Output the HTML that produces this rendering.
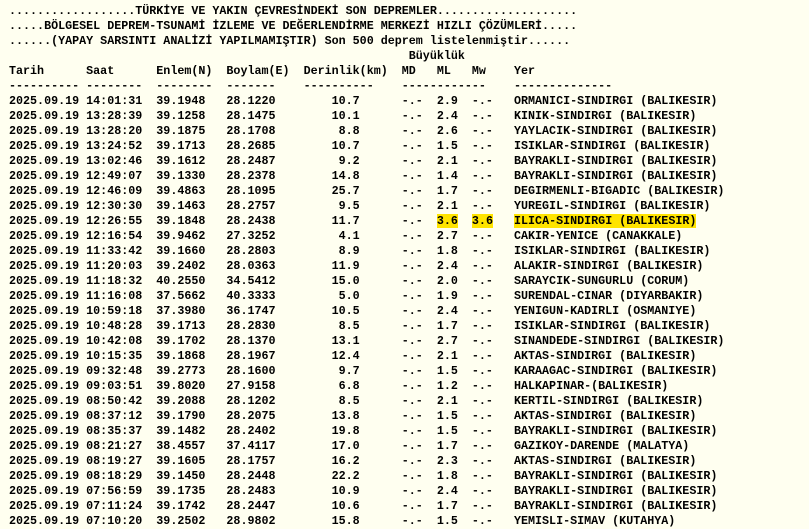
<!DOCTYPE html>
<html><head><meta charset="utf-8"><style>
html,body{margin:0;padding:0;background:#fffff0;width:809px;height:528px;overflow:hidden}
pre{margin:0;position:absolute;left:9px;top:4px;font-family:"Liberation Mono",monospace;font-weight:bold;font-size:11.7px;line-height:15px;color:#000}
.h{background:#ffe400}
</style></head><body><pre>..................TÜRKİYE VE YAKIN ÇEVRESİNDEKİ SON DEPREMLER....................
.....BÖLGESEL DEPREM-TSUNAMİ İZLEME VE DEĞERLENDİRME MERKEZİ HIZLI ÇÖZÜMLERİ.....
......(YAPAY SARSINTI ANALİZİ YAPILMAMIŞTIR) Son 500 deprem listelenmiştir......
                                                         Büyüklük
Tarih      Saat      Enlem(N)  Boylam(E)  Derinlik(km)  MD   ML   Mw    Yer
---------- --------  --------  -------    ----------    ------------    --------------
2025.09.19 14:01:31  39.1948   28.1220        10.7      -.-  2.9  -.-   ORMANICI-SINDIRGI (BALIKESIR)
2025.09.19 13:28:39  39.1258   28.1475        10.1      -.-  2.4  -.-   KINIK-SINDIRGI (BALIKESIR)
2025.09.19 13:28:20  39.1875   28.1708         8.8      -.-  2.6  -.-   YAYLACIK-SINDIRGI (BALIKESIR)
2025.09.19 13:24:52  39.1713   28.2685        10.7      -.-  1.5  -.-   ISIKLAR-SINDIRGI (BALIKESIR)
2025.09.19 13:02:46  39.1612   28.2487         9.2      -.-  2.1  -.-   BAYRAKLI-SINDIRGI (BALIKESIR)
2025.09.19 12:49:07  39.1330   28.2378        14.8      -.-  1.4  -.-   BAYRAKLI-SINDIRGI (BALIKESIR)
2025.09.19 12:46:09  39.4863   28.1095        25.7      -.-  1.7  -.-   DEGIRMENLI-BIGADIC (BALIKESIR)
2025.09.19 12:30:30  39.1463   28.2757         9.5      -.-  2.1  -.-   YUREGIL-SINDIRGI (BALIKESIR)
2025.09.19 12:26:55  39.1848   28.2438        11.7      -.-  <span class="h">3.6</span>  <span class="h">3.6</span>   <span class="h">ILICA-SINDIRGI (BALIKESIR)</span>
2025.09.19 12:16:54  39.9462   27.3252         4.1      -.-  2.7  -.-   CAKIR-YENICE (CANAKKALE)
2025.09.19 11:33:42  39.1660   28.2803         8.9      -.-  1.8  -.-   ISIKLAR-SINDIRGI (BALIKESIR)
2025.09.19 11:20:03  39.2402   28.0363        11.9      -.-  2.4  -.-   ALAKIR-SINDIRGI (BALIKESIR)
2025.09.19 11:18:32  40.2550   34.5412        15.0      -.-  2.0  -.-   SARAYCIK-SUNGURLU (CORUM)
2025.09.19 11:16:08  37.5662   40.3333         5.0      -.-  1.9  -.-   SURENDAL-CINAR (DIYARBAKIR)
2025.09.19 10:59:18  37.3980   36.1747        10.5      -.-  2.4  -.-   YENIGUN-KADIRLI (OSMANIYE)
2025.09.19 10:48:28  39.1713   28.2830         8.5      -.-  1.7  -.-   ISIKLAR-SINDIRGI (BALIKESIR)
2025.09.19 10:42:08  39.1702   28.1370        13.1      -.-  2.7  -.-   SINANDEDE-SINDIRGI (BALIKESIR)
2025.09.19 10:15:35  39.1868   28.1967        12.4      -.-  2.1  -.-   AKTAS-SINDIRGI (BALIKESIR)
2025.09.19 09:32:48  39.2773   28.1600         9.7      -.-  1.5  -.-   KARAAGAC-SINDIRGI (BALIKESIR)
2025.09.19 09:03:51  39.8020   27.9158         6.8      -.-  1.2  -.-   HALKAPINAR-(BALIKESIR)
2025.09.19 08:50:42  39.2088   28.1202         8.5      -.-  2.1  -.-   KERTIL-SINDIRGI (BALIKESIR)
2025.09.19 08:37:12  39.1790   28.2075        13.8      -.-  1.5  -.-   AKTAS-SINDIRGI (BALIKESIR)
2025.09.19 08:35:37  39.1482   28.2402        19.8      -.-  1.5  -.-   BAYRAKLI-SINDIRGI (BALIKESIR)
2025.09.19 08:21:27  38.4557   37.4117        17.0      -.-  1.7  -.-   GAZIKOY-DARENDE (MALATYA)
2025.09.19 08:19:27  39.1605   28.1757        16.2      -.-  2.3  -.-   AKTAS-SINDIRGI (BALIKESIR)
2025.09.19 08:18:29  39.1450   28.2448        22.2      -.-  1.8  -.-   BAYRAKLI-SINDIRGI (BALIKESIR)
2025.09.19 07:56:59  39.1735   28.2483        10.9      -.-  2.4  -.-   BAYRAKLI-SINDIRGI (BALIKESIR)
2025.09.19 07:11:24  39.1742   28.2447        10.6      -.-  1.7  -.-   BAYRAKLI-SINDIRGI (BALIKESIR)
2025.09.19 07:10:20  39.2502   28.9802        15.8      -.-  1.5  -.-   YEMISLI-SIMAV (KUTAHYA)
</pre></body></html>
